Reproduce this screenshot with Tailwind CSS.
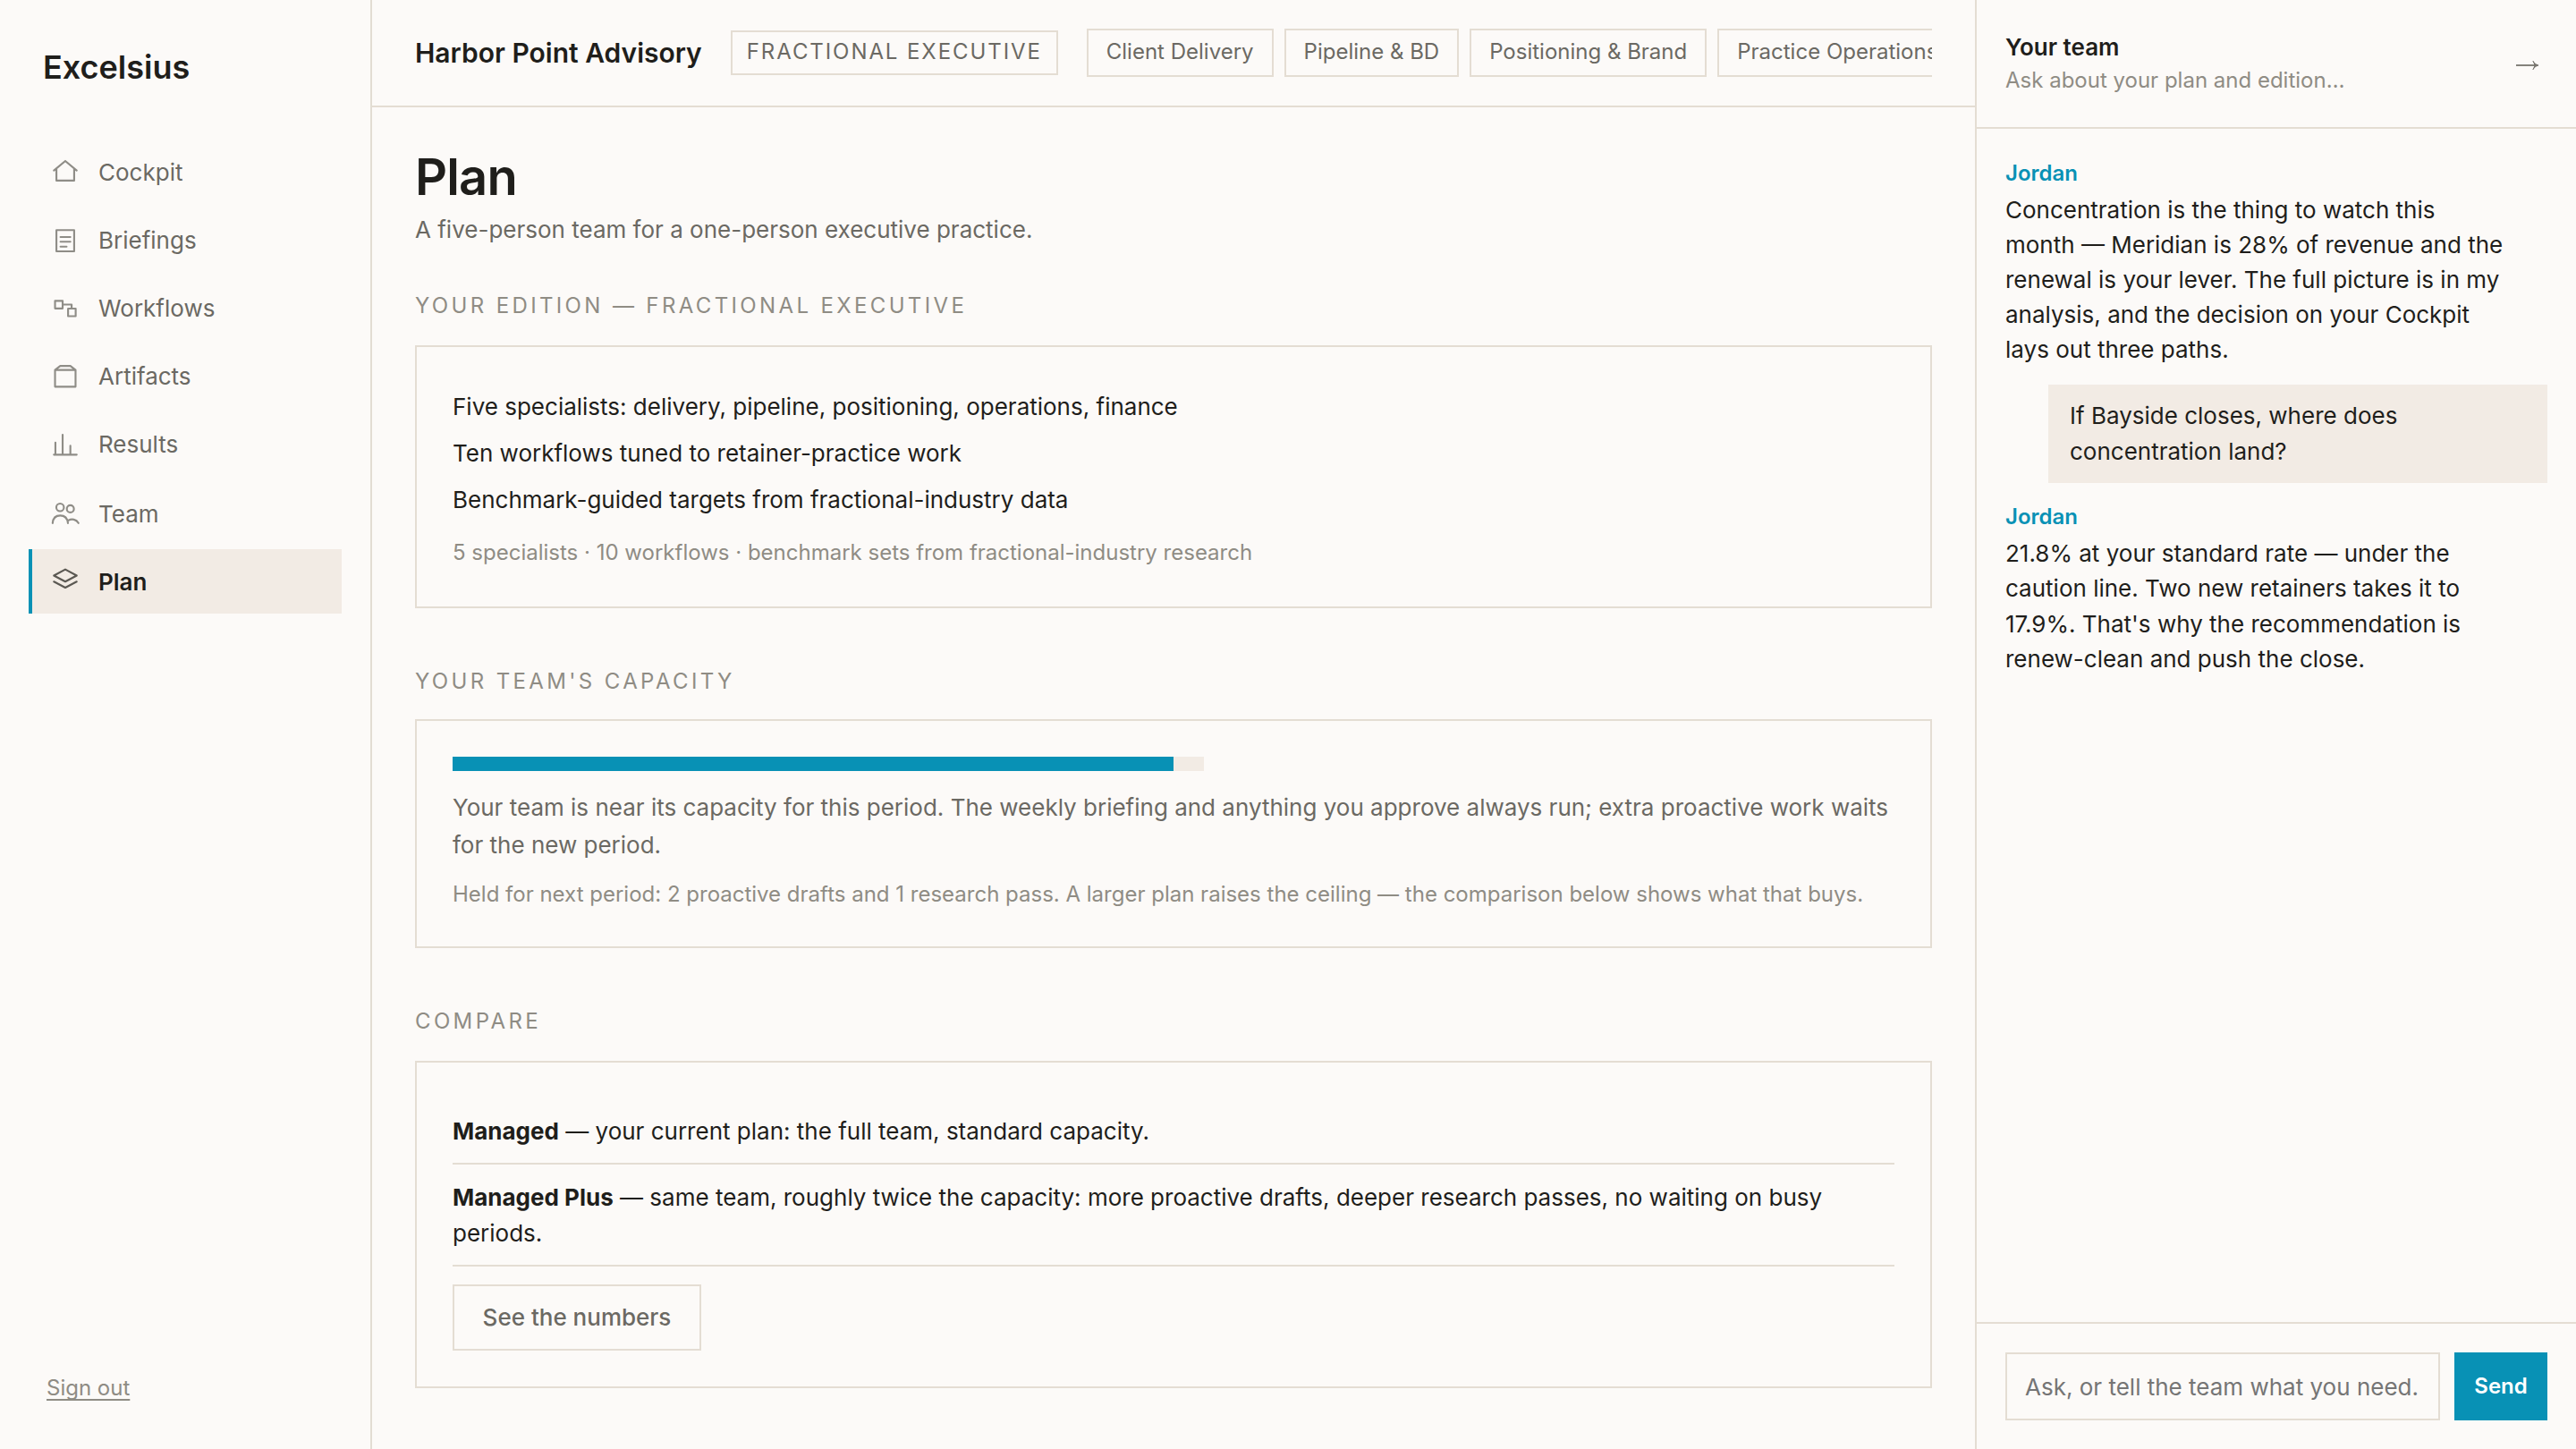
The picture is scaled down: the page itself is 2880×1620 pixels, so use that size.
<!DOCTYPE html>
<html lang="en">
<head>
  <meta charset="UTF-8" />
  <meta name="viewport" content="width=device-width, initial-scale=1.0"/>
  <title>Plan - Excelsius</title>
  <script src="https://cdn.jsdelivr.net/npm/@tailwindcss/browser@4"></script>
</head>
<body class="h-[1620px] w-[2880px] flex overflow-hidden bg-[#fcfaf8] text-[#1f1e1b] font-[Inter,sans-serif] text-[26px] leading-[39px]">
  <!-- Sidebar -->
  <aside class="w-[416px] shrink-0 border-r-2 border-[#e2ddd3] px-8 flex flex-col">
    <div class="pt-12 px-4 text-[36px] leading-[54px] font-semibold">Excelsius</div>
    <nav class="mt-[54px] flex flex-col gap-1 text-[#6b6963]">
      <a href="#" class="h-18 border-l-4 border-transparent pl-5 pt-[17px] flex items-start gap-5">
        <svg class="size-[34px] mt-0.5 text-[#8f8d87]" viewBox="0 0 24 24" fill="none" stroke="currentColor" stroke-width="1.5" stroke-linecap="round" stroke-linejoin="round"><path d="M3 11l9-7.500 9 7.500M5 9.500V19h14V9.500"/></svg>
        Cockpit
      </a>
      <a href="#" class="h-18 border-l-4 border-transparent pl-5 pt-[17px] flex items-start gap-5">
        <svg class="size-[34px] mt-0.5 text-[#8f8d87]" viewBox="0 0 24 24" fill="none" stroke="currentColor" stroke-width="1.5" stroke-linecap="round" stroke-linejoin="round"><path d="M5 4.400h14V21.200H5zM8.200 9.900H16M8.200 13.600H16M8.200 17.500H13"/></svg>
        Briefings
      </a>
      <a href="#" class="h-18 border-l-4 border-transparent pl-5 pt-[17px] flex items-start gap-5">
        <svg class="size-[34px] mt-0.5 text-[#8f8d87]" viewBox="0 0 24 24" fill="none" stroke="currentColor" stroke-width="1.5" stroke-linecap="round" stroke-linejoin="round"><path d="M3.900 6.600h6v6h-6zM14.200 12.700h6v6h-6zM9.900 9.500H17v3.200"/></svg>
        Workflows
      </a>
      <a href="#" class="h-18 border-l-4 border-transparent pl-5 pt-[17px] flex items-start gap-5">
        <svg class="size-[34px] mt-0.5 text-[#8f8d87]" viewBox="0 0 24 24" fill="none" stroke="currentColor" stroke-width="1.5" stroke-linecap="round" stroke-linejoin="round"><path d="M3.900 7.500h16.200v13.200H3.900zM3.900 7.500L8 4.300h8l4.100 3.200"/></svg>
        Artifacts
      </a>
      <a href="#" class="h-18 border-l-4 border-transparent pl-5 pt-[17px] flex items-start gap-5">
        <svg class="size-[34px] mt-0.5 text-[#8f8d87]" viewBox="0 0 24 24" fill="none" stroke="currentColor" stroke-width="1.5" stroke-linecap="round" stroke-linejoin="round"><path d="M3 20.700h18M4.200 20.700V11.200M9.900 20.700V4.900M16 20.700v-7"/></svg>
        Results
      </a>
      <a href="#" class="mt-0.5 h-18 border-l-4 border-transparent pl-5 pt-[17px] flex items-start gap-5">
        <svg class="size-[34px] mt-0.5 text-[#8f8d87]" viewBox="0 0 24 24" fill="none" stroke="currentColor" stroke-width="1.5" stroke-linecap="round" stroke-linejoin="round"><circle cx="7.900" cy="7.200" r="3"/><circle cx="16" cy="8.400" r="2.800"/><path d="M2 19.700c.3-3.800 2.500-6 6-6s5.700 2.200 6.100 6M14.400 17.600c2.700-1.700 6.300-1 8 2"/></svg>
        Team
      </a>
      <a href="#" class="h-18 border-l-4 border-[#0891b5] bg-[#f2ebe4] pl-5 pt-[17px] flex items-start gap-5 font-semibold text-[#1f1e1b]">
        <svg class="size-[34px] mt-0.5 text-[#5b5852]" viewBox="0 0 24 24" fill="none" stroke="currentColor" stroke-width="1.5" stroke-linecap="round" stroke-linejoin="round"><path d="M12 2.600l9 4.800-9 4.800-9-4.800zM3 12.200l9 4.700 9-4.700"/></svg>
        Plan
      </a>
    </nav>
    <a href="#" class="mt-auto mb-[51px] ml-5 self-start text-[24px] leading-[35px] text-[#8f8c84] underline decoration-2 underline-offset-4 [text-decoration-skip-ink:none]">Sign out</a>
  </aside>

  <!-- Main -->
  <div class="w-[1792px] shrink-0">
    <header class="h-[120px] border-b-2 border-[#e4ddd3] px-12 flex items-center gap-8 whitespace-nowrap">
      <div class="text-[30px] font-semibold">Harbor Point Advisory</div>
      <div class="h-[50px] w-[366px] border-2 border-[#e4ddd3] px-4 pt-1 text-[24px] leading-[35px] tracking-[1.92px] text-[#6b6963]">FRACTIONAL EXECUTIVE</div>
      <div class="flex-1 flex gap-3 overflow-hidden text-[24px] leading-[35px] text-[#6b6963]">
        <div class="h-[54px] shrink-0 border-2 border-[#e4ddd3] px-5 pt-1.5">Client Delivery</div>
        <div class="h-[54px] shrink-0 border-2 border-[#e4ddd3] px-5 pt-1.5">Pipeline &amp; BD</div>
        <div class="h-[54px] shrink-0 border-2 border-[#e4ddd3] px-5 pt-1.5">Positioning &amp; Brand</div>
        <div class="h-[54px] shrink-0 border-2 border-[#e4ddd3] px-5 pt-1.5">Practice Operations</div>
      </div>
    </header>

    <main class="px-12 pt-12">
      <h1 class="text-[56px] leading-[60px] font-semibold tracking-[-0.84px]">Plan</h1>
      <p class="mt-[9px] text-[#6b6963]">A five-person team for a one-person executive practice.</p>

      <h2 class="mt-12 mb-[27px] text-[24px] leading-[35px] tracking-[3.36px] text-[#8f8c84]">YOUR EDITION — FRACTIONAL EXECUTIVE</h2>
      <section class="h-[294px] border-2 border-[#e4ddd3] px-10 pt-[41px]">
        <ul class="leading-[52px]">
          <li>Five specialists: delivery, pipeline, positioning, operations, finance</li>
          <li>Ten workflows tuned to retainer-practice work</li>
          <li>Benchmark-guided targets from fractional-industry data</li>
        </ul>
        <p class="mt-[15px] text-[24px] leading-[35px] text-[#8f8c84]">5 specialists · 10 workflows · benchmark sets from fractional-industry research</p>
      </section>

      <h2 class="mt-16 mb-[25px] text-[24px] leading-[35px] tracking-[3.36px] text-[#8f8c84]">YOUR TEAM'S CAPACITY</h2>
      <section class="h-[256px] border-2 border-[#e4ddd3] p-10">
        <div class="h-4 w-[840px] bg-[#f2ebe4]">
          <div class="h-4 bg-[#0891b5]" style="width: 96%"></div>
        </div>
        <p class="mt-5 leading-[42px] text-[#6b6963]">Your team is near its capacity for this period. The weekly briefing and anything you approve always run; extra proactive work waits for the new period.</p>
        <p class="mt-4 text-[24px] leading-[35px] text-[#8f8c84]">Held for next period: 2 proactive drafts and 1 research pass. A larger plan raises the ceiling — the comparison below shows what that buys.</p>
      </section>

      <h2 class="mt-16 mb-[27px] text-[24px] leading-[35px] tracking-[3.36px] text-[#8f8c84]">COMPARE</h2>
      <section class="h-[366px] border-2 border-[#e4ddd3] p-10">
        <p class="pt-[17px] pb-4 border-b-2 border-[#e4ddd3]"><strong>Managed</strong> — your current plan: the full team, standard capacity.</p>
        <p class="pt-[17px] pb-[15px] border-b-2 border-[#e4ddd3] leading-10"><strong>Managed Plus</strong> — same team, roughly twice the capacity: more proactive drafts, deeper research passes, no waiting on busy periods.</p>
        <button class="mt-5 block h-[74px] w-[278px] border-2 border-[#e4ddd3] pb-0.5 font-medium text-[#6b6963]">See the numbers</button>
      </section>
    </main>
  </div>

  <!-- Team chat -->
  <aside class="w-[672px] shrink-0 border-l-2 border-[#e4ddd3] flex flex-col">
    <div class="h-36 border-b-2 border-[#e4ddd3] px-8 flex items-center justify-between">
      <div class="pb-[3px]">
        <div class="font-semibold">Your team</div>
        <div class="text-[24px] leading-[35px] text-[#8f8c84]">Ask about your plan and edition…</div>
      </div>
      <svg class="w-7 h-4 mr-2 mt-1" viewBox="0 0 28 16" fill="none" stroke="#77746e" stroke-width="1.8"><path d="M1 8h24"/><path fill="#77746e" stroke-width="1" d="M20 3.300c1.200 2.300 3 3.900 6 4.700-3 .8-4.800 2.400-6 4.700l2.200-4.700z"/></svg>
    </div>

    <div class="flex-1 px-8 pt-8">
      <div class="text-[24px] leading-[35px] font-semibold text-[#0891b5]">Jordan</div>
      <p class="mt-1 max-w-[560px]">Concentration is the thing to watch this month — Meridian is 28% of revenue and the renewal is your lever. The full picture is in my analysis, and the decision on your Cockpit lays out three paths.</p>
      <p class="mt-5 ml-12 h-[110px] bg-[#f2ebe4] pl-6 pr-24 pt-[15px] leading-10">If Bayside closes, where does concentration land?</p>
      <div class="mt-5 text-[24px] leading-[35px] font-semibold text-[#0891b5]">Jordan</div>
      <p class="mt-1 max-w-[560px] leading-[39.3px]">21.8% at your standard rate — under the caution line. Two new retainers takes it to 17.9%. That's why the recommendation is renew-clean and push the close.</p>
    </div>

    <div class="h-[142px] border-t-2 border-[#e4ddd3] px-8 pt-8 flex gap-4">
      <input type="text" placeholder="Ask, or tell the team what you need." class="h-[76px] w-[486px] border-2 border-[#e4ddd3] px-5 placeholder:text-[#757575]" />
      <button class="h-[76px] w-[104px] bg-[#0891b5] pb-0.5 text-[24px] leading-[35px] font-semibold text-white">Send</button>
    </div>
  </aside>
</body>
</html>
